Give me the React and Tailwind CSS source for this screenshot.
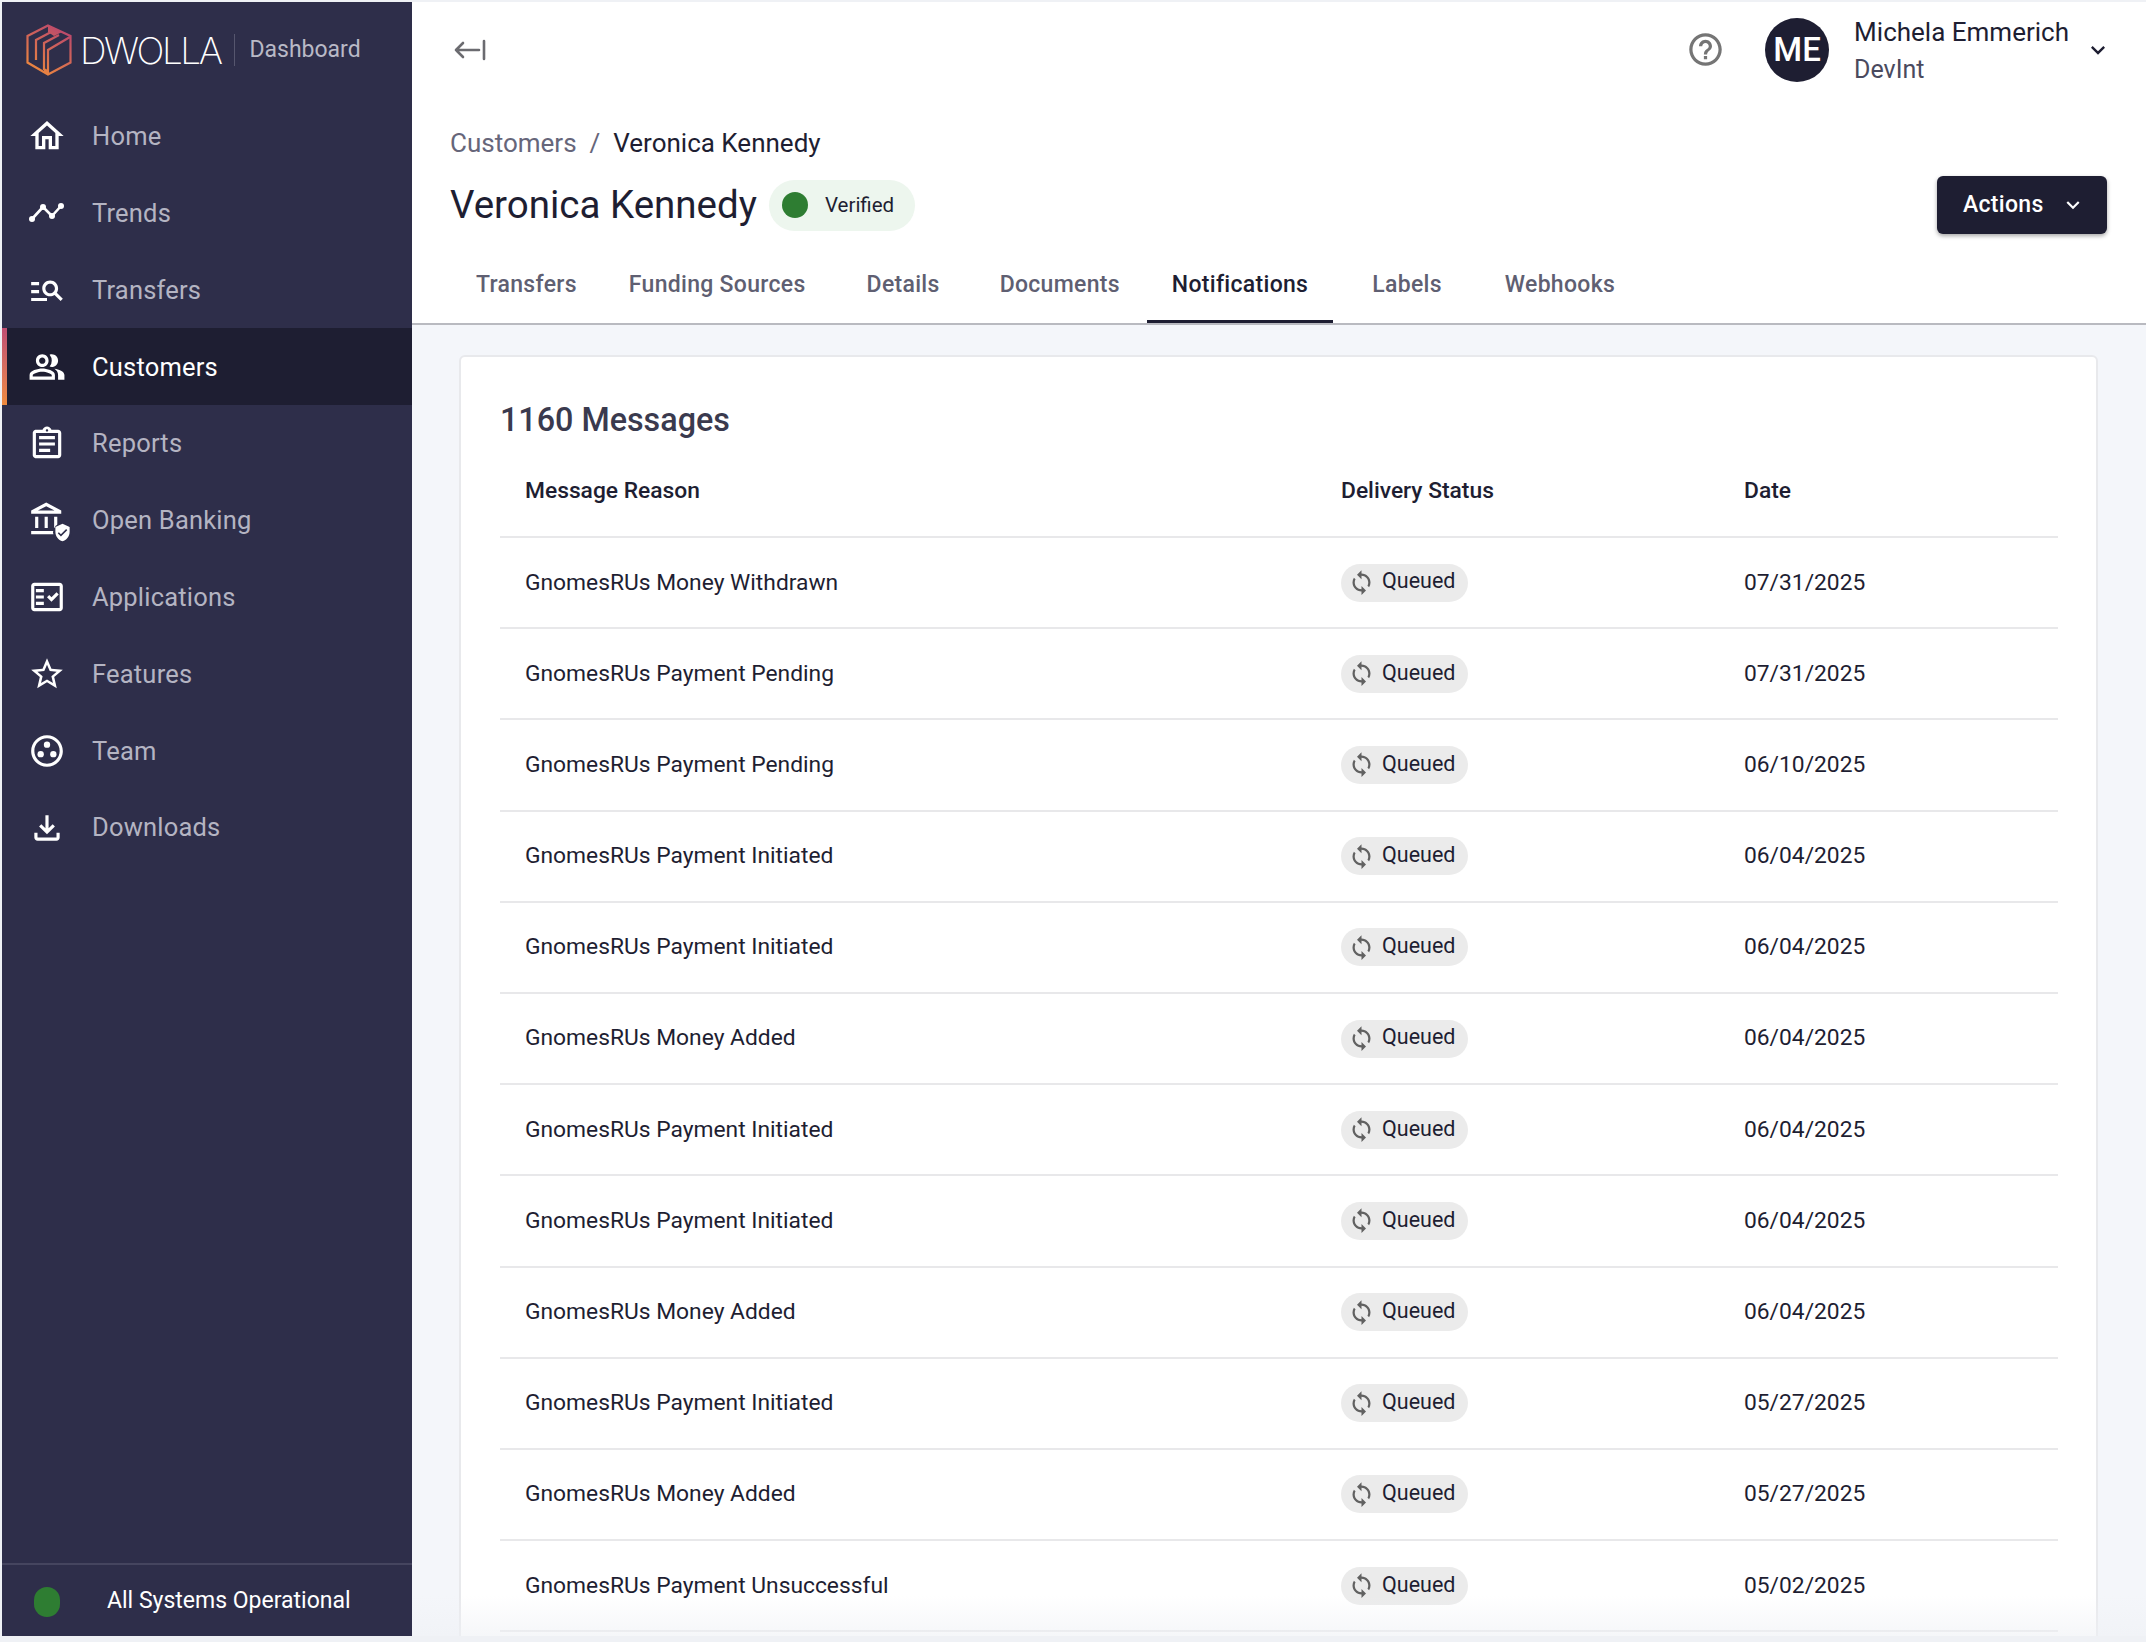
import React from 'react';
import {
  MdOutlineHome,
  MdManageSearch,
  MdOutlinePeopleAlt,
  MdOutlineAssignment,
  MdOutlineAccountBalance,
  MdVerifiedUser,
  MdOutlineFactCheck,
  MdStarBorder,
  MdOutlineGroupWork,
  MdOutlineFileDownload,
  MdHelpOutline,
  MdSync,
  MdKeyboardArrowDown,
} from 'react-icons/md';

const TrendsIcon = () => (
  <svg width="38" height="38" viewBox="0 0 38 38" fill="none" stroke="currentColor" strokeWidth="2.6" strokeLinecap="round" strokeLinejoin="round">
    <path d="M4 25 L15 13 L24 22 L33 12" />
    <circle cx="4" cy="25" r="3" fill="currentColor" stroke="none" />
    <circle cx="15" cy="13" r="3" fill="currentColor" stroke="none" />
    <circle cx="24" cy="22" r="3" fill="currentColor" stroke="none" />
    <circle cx="33" cy="12" r="3" fill="currentColor" stroke="none" />
  </svg>
);

const BankIcon = () => (
  <span className="relative block w-[38px] h-[38px]">
    <MdOutlineAccountBalance size={38} />
    <MdVerifiedUser size={19} className="absolute right-[-6px] bottom-[-3px] text-white bg-[#2e2e4a] rounded-full" />
  </span>
);

const Logo = () => (
  <svg width="46" height="52" viewBox="0 0 46 52" fill="none" strokeWidth="2.2" stroke="url(#dwolla)">
    <defs>
      <linearGradient id="dwolla" x1="38" y1="2" x2="8" y2="50" gradientUnits="userSpaceOnUse">
        <stop offset="0" stopColor="#b9456f" />
        <stop offset="1" stopColor="#ee8a3c" />
      </linearGradient>
    </defs>
    <path d="M22 1.5 L44.5 12 V38.5 L22 50.5 L1.5 38.5 V12 Z" />
    <path d="M10 36 V16 L27 7" />
    <path d="M18 46 V19 L33 11" />
    <path d="M22 50 V26 L44 13" />
    <path d="M22 1.5 L36 8 L28 12 L22 8 Z" fill="url(#dwolla)" stroke="none" />
    <path d="M18 44 L22 46 V50 L18 48 Z" fill="url(#dwolla)" stroke="none" />
  </svg>
);

const navItems = [
  { label: 'Home', icon: <MdOutlineHome size={40} /> },
  { label: 'Trends', icon: <TrendsIcon /> },
  { label: 'Transfers', icon: <MdManageSearch size={38} /> },
  { label: 'Customers', icon: <MdOutlinePeopleAlt size={38} />, active: true },
  { label: 'Reports', icon: <MdOutlineAssignment size={38} /> },
  { label: 'Open Banking', icon: <BankIcon /> },
  { label: 'Applications', icon: <MdOutlineFactCheck size={38} /> },
  { label: 'Features', icon: <MdStarBorder size={38} /> },
  { label: 'Team', icon: <MdOutlineGroupWork size={38} /> },
  { label: 'Downloads', icon: <MdOutlineFileDownload size={38} /> },
];

const tabs = [
  { label: 'Transfers', cls: 'ml-0' },
  { label: 'Funding Sources', cls: 'ml-[2px]' },
  { label: 'Details', cls: 'ml-[11px]' },
  { label: 'Documents', cls: 'ml-[10px]' },
  { label: 'Notifications', cls: 'ml-[2px]', active: true },
  { label: 'Labels', cls: 'ml-[14px]' },
  { label: 'Webhooks', cls: 'ml-[13px]' },
];

const messages = [
  ['GnomesRUs Money Withdrawn', '07/31/2025'],
  ['GnomesRUs Payment Pending', '07/31/2025'],
  ['GnomesRUs Payment Pending', '06/10/2025'],
  ['GnomesRUs Payment Initiated', '06/04/2025'],
  ['GnomesRUs Payment Initiated', '06/04/2025'],
  ['GnomesRUs Money Added', '06/04/2025'],
  ['GnomesRUs Payment Initiated', '06/04/2025'],
  ['GnomesRUs Payment Initiated', '06/04/2025'],
  ['GnomesRUs Money Added', '06/04/2025'],
  ['GnomesRUs Payment Initiated', '05/27/2025'],
  ['GnomesRUs Money Added', '05/27/2025'],
  ['GnomesRUs Payment Unsuccessful', '05/02/2025'],
];

const Sidebar = () => (
  <aside className="w-[410px] shrink-0 bg-[#2e2e4a] flex flex-col">
    <div className="h-[96px] flex items-center pl-[24px]">
      <Logo />
      <span className="ml-[8px] text-[37px] leading-none font-extralight text-white tracking-[-2.5px] font-['Inter',sans-serif]">DWOLLA</span>
      <span className="ml-[14px] w-px h-[32px] bg-[#56566e]" />
      <span className="ml-[14px] text-[23px] text-[#b9b9c6]">Dashboard</span>
    </div>
    <nav className="flex flex-col">
      {navItems.map(item => (
        <div
          key={item.label}
          className={`relative h-[76.8px] flex items-center ${item.active ? 'bg-[#1e1e32] text-white' : 'text-[#b4b4c2]'}`}
        >
          {item.active && <span className="absolute left-0 top-0 bottom-0 w-[5px] bg-gradient-to-b from-[#c04e72] to-[#ee8a3c]" />}
          <span className="w-[90px] flex justify-center text-white">{item.icon}</span>
          <span className="text-[25.5px] tracking-[0.2px]">{item.label}</span>
        </div>
      ))}
    </nav>
    <div className="mt-auto h-[73px] border-t-2 border-[#45455f] flex items-center pl-[32px] pt-[2px]">
      <span className="w-[26px] h-[30px] rounded-full bg-[#2e7d32]" />
      <span className="ml-[47px] text-[23px] text-white">All Systems Operational</span>
    </div>
  </aside>
);

const Header = () => (
  <div className="bg-white border-b-2 border-[#b9bac0] shrink-0 h-[323px] flex flex-col">
    <div className="h-[95px] flex items-center pl-[42px] pr-[34px]">
      <svg width="32" height="22" viewBox="0 0 32 22" fill="none" stroke="#6b6b70" strokeWidth="2.6" strokeLinecap="round" strokeLinejoin="round">
        <path d="M25 11 H2 M9 4 L2 11 L9 18 M30 2 V20" />
      </svg>
      <MdHelpOutline size={39} className="ml-auto text-[#757575]" />
      <div className="ml-[40px] w-[64px] h-[64px] rounded-full bg-[#1e1e32] text-white flex items-center justify-center text-[33px] font-medium">ME</div>
      <div className="ml-[25px] mt-[2px] flex flex-col gap-[9px]">
        <span className="text-[26px] leading-[30px] text-[#1e1e32]">Michela Emmerich</span>
        <span className="text-[25px] leading-[28px] text-[#4a4a5e]">DevInt</span>
      </div>
      <MdKeyboardArrowDown size={28} className="ml-[15px] text-[#1e1e32]" />
    </div>
    <div className="pl-[38px] pr-[39px] pt-[31px]">
      <div className="text-[26px] leading-[30px] text-[#66667a]">
        Customers<span className="mx-[13px]">/</span><span className="text-[#1e1e32]">Veronica Kennedy</span>
      </div>
      <div className="flex items-center mt-[18px] h-[58px]">
        <h1 className="text-[38.5px] text-[#1e1e32]">Veronica Kennedy</h1>
        <div className="ml-[12px] h-[51px] w-[146px] rounded-full bg-[#edf6ee] flex items-center pl-[13px]">
          <span className="w-[26px] h-[26px] rounded-full bg-[#2e7d32]" />
          <span className="ml-[17px] text-[20.5px] text-[#1e1e32]">Verified</span>
        </div>
        <button className="ml-auto w-[170px] h-[58px] rounded-[6px] bg-[#1e1e32] text-white flex items-center pl-[26px] shadow-[0_2px_4px_rgba(0,0,0,0.35)]">
          <span className="text-[23px] font-medium tracking-[0.3px]">Actions</span>
          <MdKeyboardArrowDown size={26} className="ml-[16px]" />
        </button>
      </div>
    </div>
    <div className="mt-auto flex pl-[39px]">
      {tabs.map(tab => (
        <div
          key={tab.label}
          className={`h-[64px] px-[25px] pb-[8px] flex items-center text-[23px] font-medium tracking-[0.3px] border-b-[3px] ${tab.cls} ${tab.active ? 'text-[#1e1e32] border-[#1e1e32]' : 'text-[#5f5f72] border-transparent'}`}
        >
          {tab.label}
        </div>
      ))}
    </div>
  </div>
);

const MessageRow = ({ reason, date }) => (
  <div className="h-[91.2px] shrink-0 border-b-2 border-[#e8e8ea] grid grid-cols-[816px_403px_1fr] items-center pl-[25px] text-[22.8px] text-[#1e1e32]">
    <span>{reason}</span>
    <span className="inline-flex items-center w-[127px] h-[38px] rounded-full bg-[#ebebeb] pl-[7px]">
      <MdSync size={27} className="text-[#616161]" />
      <span className="ml-[7px] text-[21.5px] mb-[2px]">Queued</span>
    </span>
    <span>{date}</span>
  </div>
);

const App = () => (
  <div className="w-[2146px] h-[1642px] overflow-hidden bg-[#eff1f5] pt-[2px] pl-[2px] pb-[6px] flex font-['Roboto',sans-serif]">
    <Sidebar />
    <main className="relative flex-1 min-w-0 flex flex-col bg-[#f4f6fa]">
      <Header />
      <div className="flex-1 min-h-0 overflow-hidden pl-[47px] pr-[48px] pt-[30px]">
        <div className="bg-white border-2 border-[#e8e9ec] rounded-[6px] pl-[39px] pr-[38px] pt-[43px] h-[1400px]">
          <h2 className="text-[32.3px] leading-[40px] font-medium text-[#3a3a4e]">1160 Messages</h2>
          <div className="h-[94px] mt-[4px] pt-[2px] border-b-2 border-[#e8e8ea] grid grid-cols-[816px_403px_1fr] items-center pl-[25px] text-[22.8px] font-medium text-[#1e1e32]">
            <span>Message Reason</span>
            <span>Delivery Status</span>
            <span>Date</span>
          </div>
          {messages.map(([reason, date], i) => (
            <MessageRow key={i} reason={reason} date={date} />
          ))}
        </div>
      </div>
      <div className="absolute left-0 right-0 bottom-0 h-[40px] bg-gradient-to-b from-transparent to-[#eff1f5]/60" />
    </main>
  </div>
);

export default App;
